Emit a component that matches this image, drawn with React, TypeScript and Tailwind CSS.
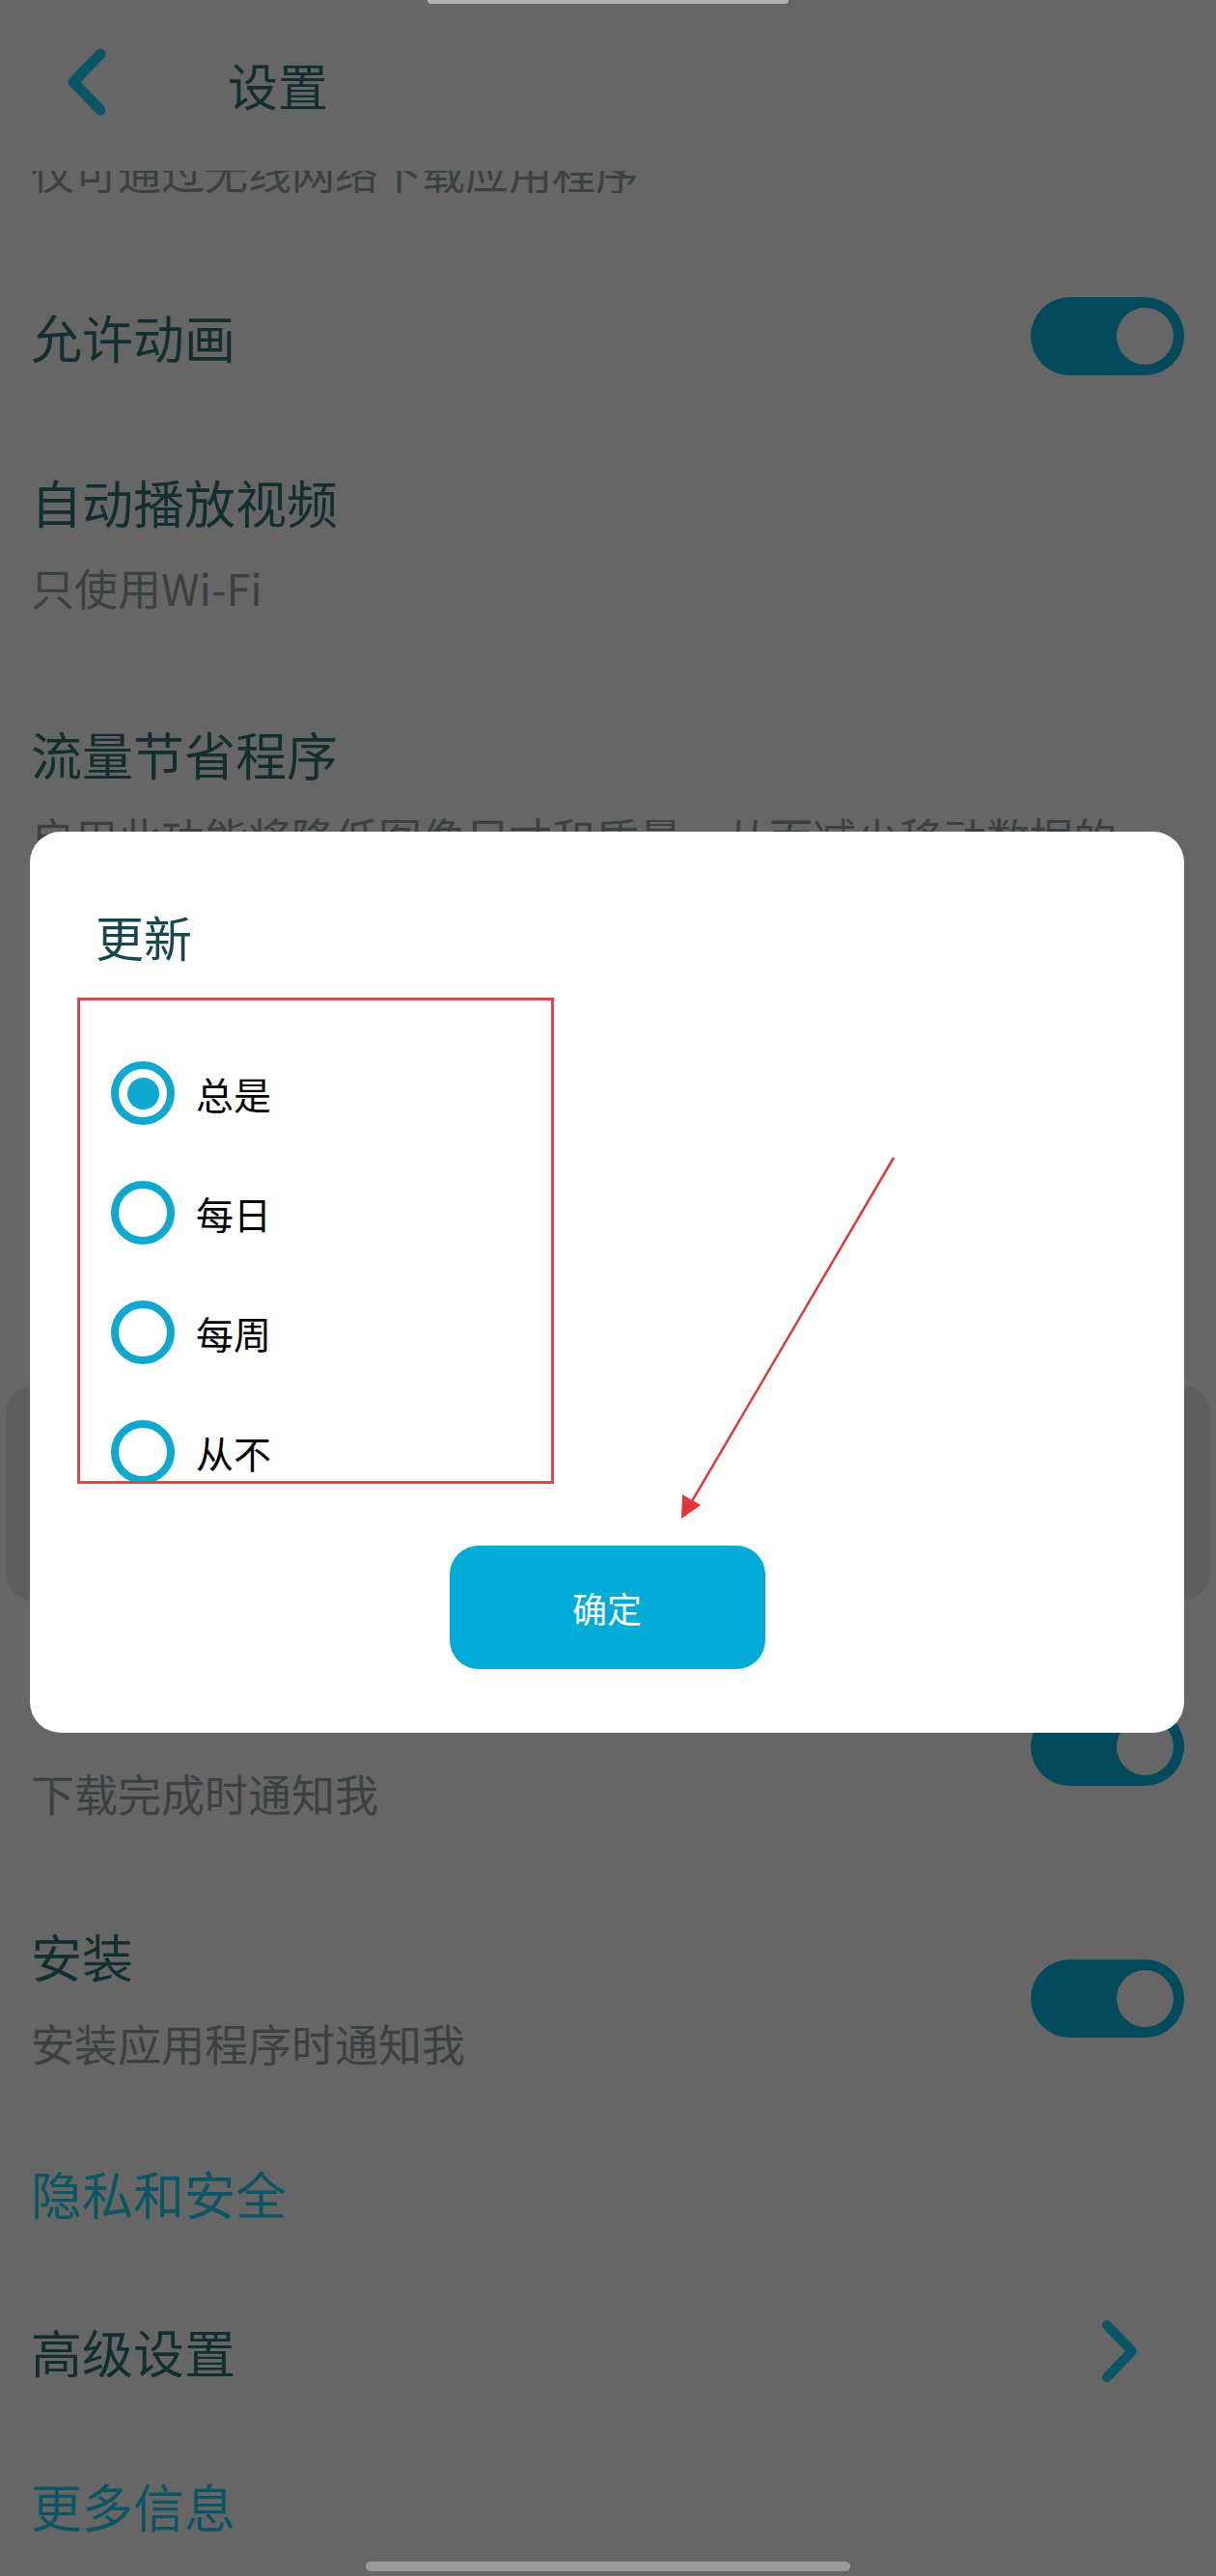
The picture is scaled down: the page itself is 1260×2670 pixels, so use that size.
const FONT = "font-['Noto_Sans_CJK_SC','Noto_Sans',sans-serif]";

function Toggle() {
  return (
    <div className="w-[159px] h-[81px] shrink-0 rounded-full bg-[#034b5c] flex items-center justify-end pr-[11px]">
      <div className="w-[59px] h-[59px] rounded-full bg-[#666666]" />
    </div>
  );
}

function Radio({ checked }: { checked?: boolean }) {
  return (
    <div className="w-[66px] h-[66px] shrink-0 rounded-full border-[8px] border-[#10a8cf] flex items-center justify-center">
      {checked && <div className="w-[33px] h-[33px] rounded-full bg-[#10a8cf]" />}
    </div>
  );
}

const options = [
  { label: '总是', checked: true },
  { label: '每日' },
  { label: '每周' },
  { label: '从不' },
];

export default function App() {
  return (
    <div className={`relative w-[1260px] h-[2670px] overflow-hidden bg-[#666666] ${FONT}`}>
      {/* header */}
      <header className="h-[177px]">
        <div className="flex justify-center">
          <div className="w-[374px] h-[4px] rounded-b bg-[#b3b3b3]" />
        </div>
        <div className="flex items-center pl-[66px] pt-[46px]">
          <svg width="46" height="70" viewBox="0 0 46 70" fill="none">
            <polyline
              points="38,6 10,35 38,64"
              stroke="#0a5566"
              strokeWidth="11"
              strokeLinecap="round"
              strokeLinejoin="round"
            />
          </svg>
          <h1 className="ml-[124px] pt-[6px] text-[52px] leading-[60px] text-[#132e30]">设置</h1>
        </div>
      </header>

      {/* list, scrolled under the header */}
      <div className="h-[23px] overflow-hidden flex items-end pl-[32px]">
        <p className="text-[45px] leading-none whitespace-nowrap text-[#3b4040]">仅可通过无线网络下载应用程序</p>
      </div>

      <div className="mt-[108px] flex items-center justify-between pl-[32px] pr-[33px]">
        <p className="text-[53px] leading-[60px] text-[#132e30]">允许动画</p>
        <Toggle />
      </div>

      <div className="pl-[32px]">
        <p className="mt-[101px] text-[53px] leading-[60px] text-[#132e30]">自动播放视频</p>
        <p className="mt-[31px] text-[45px] leading-[56px] text-[#3b4040]">只使用Wi-Fi</p>
        <p className="mt-[114px] text-[53px] leading-[60px] text-[#132e30]">流量节省程序</p>
        <p className="mt-[29px] text-[45px] leading-[56px] whitespace-nowrap text-[#3b4040]">
          启用此功能将降低图像尺寸和质量，从而减少移动数据的
        </p>
      </div>

      {/* card behind the dialog */}
      <div className="mt-[540px] mx-[6px] h-[223px] rounded-[30px] bg-[#5e5e5e]" />

      <div className="mt-[75px] flex items-center justify-between pl-[32px] pr-[33px]">
        <div>
          <p className="text-[53px] leading-[60px] text-[#132e30]">下载</p>
          <p className="mt-[37px] text-[45px] leading-[56px] text-[#3b4040]">下载完成时通知我</p>
        </div>
        <Toggle />
      </div>

      <div className="mt-[110px] flex items-center justify-between pl-[32px] pr-[33px]">
        <div>
          <p className="text-[53px] leading-[60px] text-[#132e30]">安装</p>
          <p className="mt-[33px] text-[45px] leading-[56px] text-[#3b4040]">安装应用程序时通知我</p>
        </div>
        <Toggle />
      </div>

      <p className="mt-[97px] pl-[32px] text-[53px] leading-[60px] text-[#0c5663]">隐私和安全</p>

      <div className="mt-[101px] flex items-center justify-between pl-[32px] pr-[80px]">
        <p className="text-[53px] leading-[60px] text-[#132e30]">高级设置</p>
        <svg width="40" height="66" viewBox="0 0 40 66" fill="none">
          <polyline
            points="7,6 33,33 7,60"
            stroke="#0a5566"
            strokeWidth="10"
            strokeLinecap="round"
            strokeLinejoin="round"
          />
        </svg>
      </div>

      <p className="mt-[97px] pl-[32px] text-[53px] leading-[60px] text-[#0c5663]">更多信息</p>

      <div className="mt-[28px] flex justify-center">
        <div className="w-[502px] h-[10px] rounded-full bg-[#9a9a9a]" />
      </div>

      {/* dialog */}
      <div className="absolute left-[31px] top-[862px] w-[1196px] h-[934px] rounded-[32px] bg-white">
        <h2 className="pl-[68px] pt-[78px] text-[50px] leading-[60px] text-[#17474d]">更新</h2>

        <div className="mt-[71px] pl-[84px]">
          {options.map((o) => (
            <div key={o.label} className="h-[124px] flex items-center gap-[22px]">
              <Radio checked={o.checked} />
              <span className="text-[39px] leading-none text-black">{o.label}</span>
            </div>
          ))}
        </div>

        <button className="mt-[35px] mx-auto flex items-center justify-center w-[327px] h-[128px] rounded-[30px] bg-[#00acd5] text-[36px] text-white">
          确定
        </button>

        {/* annotation */}
        <div className="absolute left-[49px] top-[172px] w-[494px] h-[504px] border-[3px] border-[#d9484a]" />
        <svg className="absolute inset-0 pointer-events-none" width="1196" height="934" viewBox="0 0 1196 934">
          <line x1="895" y1="338" x2="686" y2="694" stroke="#e0383a" strokeWidth="2.5" />
          <polygon points="675,712 676,687 695,698" fill="#e0383a" />
        </svg>
      </div>
    </div>
  );
}
